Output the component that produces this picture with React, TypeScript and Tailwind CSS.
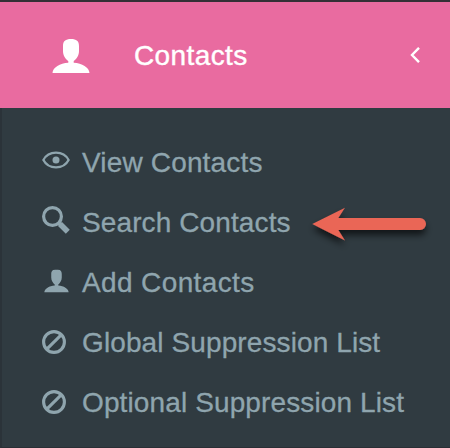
import type { ReactNode } from 'react';

function UserIcon({ className }: { className: string }) {
  return (
    <svg className={className} viewBox="0 0 38 34" preserveAspectRatio="none" fill="currentColor">
      <path d="M19 0C24.5 0 27 2 27 7V12C27 16.5 24.5 20.3 21.7 22V23.8C30 24.2 37.2 28.5 37.5 34H.5C.8 28.5 8 24.2 16.3 23.8V22C13.5 20.3 11 16.5 11 12V7C11 2 13.5 0 19 0Z" />
    </svg>
  );
}

function EyeIcon() {
  return (
    <svg className="h-[18px] w-7 -translate-y-0.5" viewBox="0 0 28 18" fill="none" stroke="currentColor" strokeWidth="2.3">
      <path d="M1.4 9C6.5-.8 21.5-.8 26.6 9C21.5 18.8 6.5 18.8 1.4 9Z" />
      <circle cx="14" cy="9" r="3.5" fill="currentColor" stroke="none" />
    </svg>
  );
}

function SearchIcon() {
  return (
    <svg className="h-7 w-7 -translate-y-0.5" viewBox="0 0 28 28" fill="none" stroke="currentColor">
      <circle cx="10.5" cy="10.5" r="8.9" strokeWidth="3.2" />
      <path d="M16.5 16.5L19 19" strokeWidth="4" />
      <path d="M18 18L25.8 25.8" strokeWidth="5.6" />
    </svg>
  );
}

function BanIcon() {
  return (
    <svg className="h-6 w-6" viewBox="0 0 24 24" fill="none" stroke="currentColor" strokeWidth="3.1">
      <circle cx="12" cy="12" r="10.4" />
      <path d="M4.8 19.2L19.2 4.8" />
    </svg>
  );
}

function Arrow() {
  return (
    <svg className="ml-[13px] h-[60px] w-[140px] shrink-0 overflow-visible" viewBox="304 192 140 60">
      <defs>
        <filter id="shadow" x="-20%" y="-50%" width="140%" height="230%">
          <feDropShadow dx="0" dy="5" stdDeviation="3.5" floodColor="#000" floodOpacity=".65" />
        </filter>
      </defs>
      <path
        filter="url(#shadow)"
        fill="#ea6656"
        d="M312.3 224L345 207.7L338.3 218H420A6 6 0 0 1 420 230H338.3L345 240.5Z"
      />
    </svg>
  );
}

function Item({ icon, label, spacing, children }: { icon: ReactNode; label: string; spacing: string; children?: ReactNode }) {
  return (
    <li className="flex h-[60px] items-center">
      <span className="flex w-10 shrink-0 items-center">{icon}</span>
      <span className={`whitespace-nowrap pt-0.5 [-webkit-text-stroke:0.3px_#8fa5ae] ${spacing}`}>{label}</span>
      {children}
    </li>
  );
}

export default function App() {
  return (
    <nav className="h-[448px] w-[450px] overflow-hidden border-t-2 border-[#352f36] bg-[#303b41] font-['Liberation_Sans',Arial,sans-serif] text-[28px] leading-[32px]">
      <div className="flex h-[106px] items-center bg-[#e96ba0] pl-[52px] text-white">
        <UserIcon className="h-[34px] w-[38px] translate-y-px" />
        <span className="ml-11 pt-0.5 tracking-[0.4px] [-webkit-text-stroke:0.4px_white]">Contacts</span>
        <svg className="ml-auto mr-[30px] h-4 w-[10px]" viewBox="0 0 10 16" fill="none" stroke="currentColor" strokeWidth="2.4">
          <path d="M9 .8L2 8L9 15.2" />
        </svg>
      </div>
      <ul className="h-[340px] border-b border-l-2 border-b-[#2a2f35] border-l-[#2b3339] pl-10 pt-6 text-[#8fa5ae]">
        <Item icon={<EyeIcon />} label="View Contacts" spacing="tracking-[0.16px]" />
        <Item icon={<SearchIcon />} label="Search Contacts" spacing="tracking-[0.11px]">
          <Arrow />
        </Item>
        <Item icon={<UserIcon className="ml-[1.5px] h-[23px] w-[25px] -translate-y-[1.5px]" />} label="Add Contacts" spacing="tracking-[0.38px]" />
        <Item icon={<BanIcon />} label="Global Suppression List" spacing="tracking-[0.11px]" />
        <Item icon={<BanIcon />} label="Optional Suppression List" spacing="tracking-[0.12px]" />
      </ul>
    </nav>
  );
}
